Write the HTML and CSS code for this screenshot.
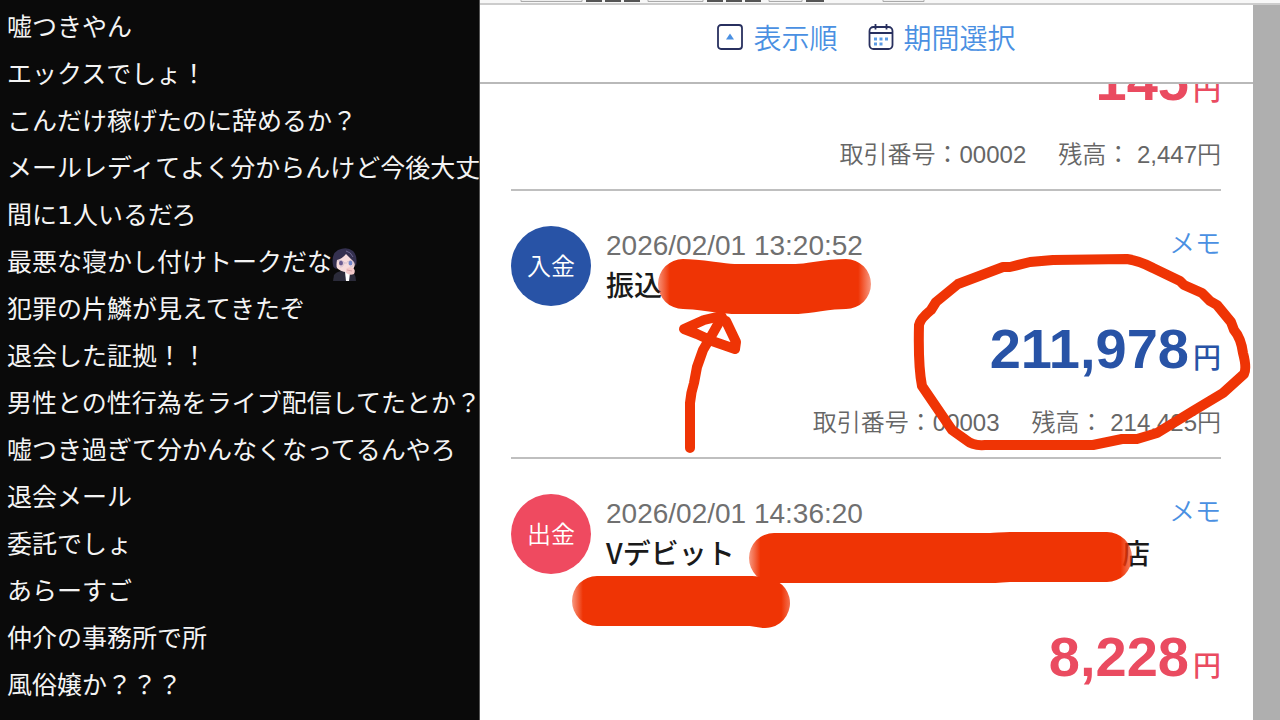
FILE: index.html
```html
<!DOCTYPE html>
<html lang="ja">
<head>
  <meta charset="UTF-8">
  <meta name="viewport" content="width=device-width, initial-scale=1.0">
  <title>入出金明細</title>
  <link rel="stylesheet" href="styles.css">
</head>
<body>
  <div class="page">
    <ul class="chat">
      <li>嘘つきやん</li>
      <li>エックスでしょ！</li>
      <li>こんだけ稼げたのに辞めるか？</li>
      <li>メールレディてよく分からんけど今後大丈夫</li>
      <li>間に1人いるだろ</li>
      <li>最悪な寝かし付けトークだな<svg class="emote" viewBox="0 0 25 33" role="img" aria-label="スタンプ">
          <path d="M1 33 L2 27 Q4 24 9 23 L19 24 Q24 25 24 33Z" fill="#2b2b3a"/>
          <path d="M13 24 L18 25 L17 33 L14 33Z" fill="#fff"/>
          <path d="M3 10 Q5 2 13 3 Q22 4 23 14 Q23 22 17 24 Q9 25 4 19Z" fill="#f7dcdc"/>
          <path d="M1 17 Q-1 6 6 2 Q15 -2 21 3 Q26 8 24 18 L21 13 Q18 10 14 6 Q10 11 5 12 Q4 17 5 21 Q1 20 1 17Z" fill="#34304f"/>
          <path d="M14 3 Q19 4 21 9" fill="none" stroke="#6d668f" stroke-width="1"/>
          <ellipse cx="9" cy="15" rx="2" ry="2.5" fill="#6a5c91"/>
          <ellipse cx="18.5" cy="15" rx="2" ry="2.5" fill="#7286c9"/>
          <path d="M5 13 Q9 11 12 14 Q12 19 8 19 M15 14 Q19 11 22 14 Q22 19 18 19 M12 15 H15" fill="none" stroke="#b3a4c4" stroke-width=".5"/>
          <path d="M14 21 Q17 18 21 20 Q24 22 22 26 Q18 28 14 25Z" fill="#f3c9c9"/>
          <path d="M15 22 L20 23" stroke="#c98f98" stroke-width=".7"/>
        </svg></li>
      <li>犯罪の片鱗が見えてきたぞ</li>
      <li>退会した証拠！！</li>
      <li>男性との性行為をライブ配信してたとか？</li>
      <li>嘘つき過ぎて分かんなくなってるんやろ</li>
      <li>退会メール</li>
      <li>委託でしょ</li>
      <li>あらーすご</li>
      <li>仲介の事務所で所</li>
      <li>風俗嬢か？？？</li>
    </ul>

    <div class="bank">
      <div class="topbar">
        <svg width="480" height="3" aria-hidden="true">
          <path d="M41 0 V1.5 H102 V0 M168 0 V1.5 H223 V0 M289 0 V1.5 H322 V0 M403 0 V1.5 H444 V0" fill="#eee" stroke="#aaa"/>
          <path d="M106 0h16v2h-16z M125 0h16v2h-16z M144 0h16v2h-16z M227 0h16v2h-16z M246 0h16v2h-16z M265 0h16v2h-16z M326 0h18v2h-18z" fill="#555"/>
        </svg>
      </div>

      <div class="window">
        <div class="content">
          <div class="toolbar">
            <button type="button">
              <svg width="26" height="26" viewBox="0 0 26 26" aria-hidden="true">
                <rect x="1" y="1" width="24" height="24" rx="3" fill="none" stroke="#28305f" stroke-width="1.8"/>
                <path d="M13 9.5 L17 15.5 H9Z" fill="#4a90e2"/>
              </svg>
              表示順
            </button>
            <button type="button">
              <svg width="26" height="26" viewBox="0 0 26 26" aria-hidden="true">
                <rect x="1.5" y="3" width="23" height="22" rx="4" fill="none" stroke="#28305f" stroke-width="1.8"/>
                <path d="M1.5 9 H24.5 M7.5 0 V5.5 M18.5 0 V5.5" stroke="#28305f" stroke-width="1.8"/>
                <path d="M6 13.5h3v3h-3z M11.5 13.5h3v3h-3z M17 13.5h3v3h-3z M6 18.5h3v3h-3z M11.5 18.5h3v3h-3z" fill="#5b9be6"/>
              </svg>
              期間選択
            </button>
          </div>

          <div class="entries">
            <div class="entry entry-scrolled">
              <div class="amount out">145<span class="yen">円</span></div>
              <div class="detail"><span>取引番号：00002</span><span>残高： 2,447円</span></div>
            </div>

            <div class="entry">
              <div class="summary">
                <div class="badge in">入金</div>
                <div class="info">
                  <div class="date">2026/02/01 13:20:52</div>
                  <div class="name">振込</div>
                </div>
                <a class="memo" href="#">メモ</a>
              </div>
              <div class="amount in">211,978<span class="yen">円</span></div>
              <div class="detail"><span>取引番号：00003</span><span>残高： 214,425円</span></div>
            </div>

            <div class="entry">
              <div class="summary">
                <div class="badge out">出金</div>
                <div class="info">
                  <div class="date">2026/02/01 14:36:20</div>
                  <div class="name name-long"><span>Vデビット</span><span>店</span></div>
                </div>
                <a class="memo" href="#">メモ</a>
              </div>
              <div class="amount out">8,228<span class="yen">円</span></div>
            </div>
          </div>
        </div>
        <div class="scrollbar"></div>
      </div>

      <!-- red marker drawn over the statement -->
      <svg class="marker" viewBox="480 0 800 720" aria-hidden="true">
        <defs>
          <linearGradient id="fade1" gradientUnits="userSpaceOnUse" x1="657" y1="0" x2="871" y2="0">
            <stop offset="0" stop-color="#ef3405" stop-opacity=".5"/>
            <stop offset=".06" stop-color="#ef3405"/>
            <stop offset=".94" stop-color="#ef3405"/>
            <stop offset="1" stop-color="#ef3405" stop-opacity=".5"/>
          </linearGradient>
          <linearGradient id="fade2" gradientUnits="userSpaceOnUse" x1="749" y1="0" x2="1132" y2="0">
            <stop offset="0" stop-color="#ef3405" stop-opacity=".5"/>
            <stop offset=".03" stop-color="#ef3405"/>
            <stop offset=".97" stop-color="#ef3405"/>
            <stop offset="1" stop-color="#ef3405" stop-opacity=".6"/>
          </linearGradient>
          <linearGradient id="fade3" gradientUnits="userSpaceOnUse" x1="572" y1="0" x2="790" y2="0">
            <stop offset="0" stop-color="#ef3405" stop-opacity=".5"/>
            <stop offset=".05" stop-color="#ef3405"/>
            <stop offset=".96" stop-color="#ef3405"/>
            <stop offset="1" stop-color="#ef3405" stop-opacity=".7"/>
          </linearGradient>
        </defs>
        <g class="bars">
          <path d="M683 284 C700 284 715 288 733 289 H797 C815 288 825 284 846 284" stroke="url(#fade1)"/>
          <path d="M774 558 H990 C998 558 1002 557 1010 557 H1107" stroke="url(#fade2)"/>
          <path d="M597 601 H752 L765 603" stroke="url(#fade3)"/>
        </g>
        <g class="lines">
          <path d="M690 448 V403 Q691 392 694 383 L697 367 L703 350 L713 333 L722 317"/>
          <path d="M721 316 L704 320 L684 329 L697 334 L712 341 L735 349 L736 342 L726 321"/>
          <path d="M1053 260 L1127 259 Q1140 261 1153 268 L1180 281 L1184 285 L1202 293 L1210 301 L1217 305 L1231 322 L1234 330 Q1241 338 1243 353 Q1247 368 1244 374 L1223 393 L1193 411 L1157 433 L1137 439 L1122 439 L1093 445 H985 Q973 446 966 440 L952 430 L922 386 Q918 366 919 325 Q920 319 931 310 L936 302 L958 284 L1003 267 L1010 267 L1030 262 L1053 260"/>
        </g>
      </svg>
    </div>
  </div>
</body>
</html>
```
FILE: styles.css
```css
* {
  box-sizing: border-box;
}
body {
  margin: 0;
  font-family: "Liberation Sans", "Noto Sans CJK JP", sans-serif;
  background: #fff;
}
.page {
  display: grid;
  grid-template-columns: 37.5% 1fr;
  height: 100vh;
  overflow: hidden;
}

/* chat */
.chat {
  margin: 0;
  padding: 4px 0 0 7px;
  list-style: none;
  overflow: hidden;
  background: #0a0a0a;
  border-right: 1px solid #555;
  color: #f4f4f4;
  font-family: "DejaVu Sans", "Noto Sans CJK JP", sans-serif;
  font-size: 25px;
  line-height: 47px;
  white-space: nowrap;
}
.chat li {
  height: 47px;
}
.emote {
  width: 25px;
  height: 33px;
  vertical-align: middle;
}

/* bank statement */
.bank {
  position: relative;
  display: flex;
  flex-direction: column;
  min-width: 0;
  overflow: hidden;
}
.topbar {
  display: flex;
  flex-shrink: 0;
  height: 5px;
  background: #f7f7f7;
  border-bottom: 2px solid #ccc;
}
.window {
  flex: 1;
  display: flex;
  min-height: 0;
}
.content {
  flex: 1;
  display: flex;
  flex-direction: column;
  min-width: 0;
}
.scrollbar {
  width: 27px;
  background: #afafaf;
}
.toolbar {
  display: flex;
  flex-shrink: 0;
  justify-content: center;
  gap: 30px;
  padding: 12px 0 25px;
  border-bottom: 2px solid #b9b9b9;
}
.toolbar button {
  display: flex;
  align-items: center;
  gap: 10px;
  padding: 0;
  border: none;
  background: none;
  color: #4a90e2;
  font-family: "Noto Sans CJK JP", sans-serif;
  font-size: 28px;
  font-weight: 350;
  line-height: 40px;
  cursor: pointer;
}
.entries {
  flex: 1;
  min-height: 0;
  padding: 0 32px 0 31px;
  overflow: hidden;
}
.entry {
  padding: 35px 0 18px;
  border-bottom: 2px solid #bfbfbf;
}
.entry:last-child {
  border-bottom: none;
}
.entry-scrolled {
  margin-top: -46px;
  padding-top: 0;
}
.summary {
  display: flex;
  align-items: flex-start;
  gap: 15px;
}
.badge {
  display: flex;
  align-items: center;
  justify-content: center;
  width: 80px;
  height: 80px;
  padding-bottom: 4px;
  border-radius: 50%;
  color: #fff;
  font-size: 24px;
  font-weight: 350;
}
.badge.in {
  background: #2853a6;
}
.badge.out {
  background: #ef4a60;
}
.info {
  flex: 1;
  font-size: 28px;
  line-height: 40px;
}
.date {
  color: #707070;
}
.name {
  height: 40px;
  color: #1a1a1a;
  font-family: "Noto Sans CJK JP", sans-serif;
  font-weight: 500;
  line-height: 36px;
}
.name-long {
  display: flex;
  justify-content: space-between;
  height: 80px;
  padding-right: 4px;
}
.memo {
  color: #4a90e2;
  font-size: 26px;
  font-weight: 350;
  line-height: 36px;
  text-decoration: none;
}
.amount {
  display: flex;
  align-items: baseline;
  justify-content: flex-end;
  gap: 4px;
  height: 56px;
  margin-top: 15px;
  font-size: 56px;
  font-weight: 700;
  line-height: 56px;
}
.amount.in {
  color: #2853a6;
}
.amount.out {
  color: #ea4b60;
}
.yen {
  font-size: 28px;
  font-weight: 500;
}
.detail {
  display: flex;
  justify-content: flex-end;
  gap: 32px;
  margin-top: 30px;
  color: #666;
  font-size: 24px;
  font-weight: 350;
  line-height: 32px;
}

.marker {
  position: absolute;
  top: 0;
  left: 0;
  width: 100%;
  pointer-events: none;
}
.marker path {
  fill: none;
  stroke-linecap: round;
  stroke-linejoin: round;
}
.bars path {
  stroke-width: 50px;
}
.lines path {
  stroke: #ef3405;
  stroke-width: 10px;
}
```
